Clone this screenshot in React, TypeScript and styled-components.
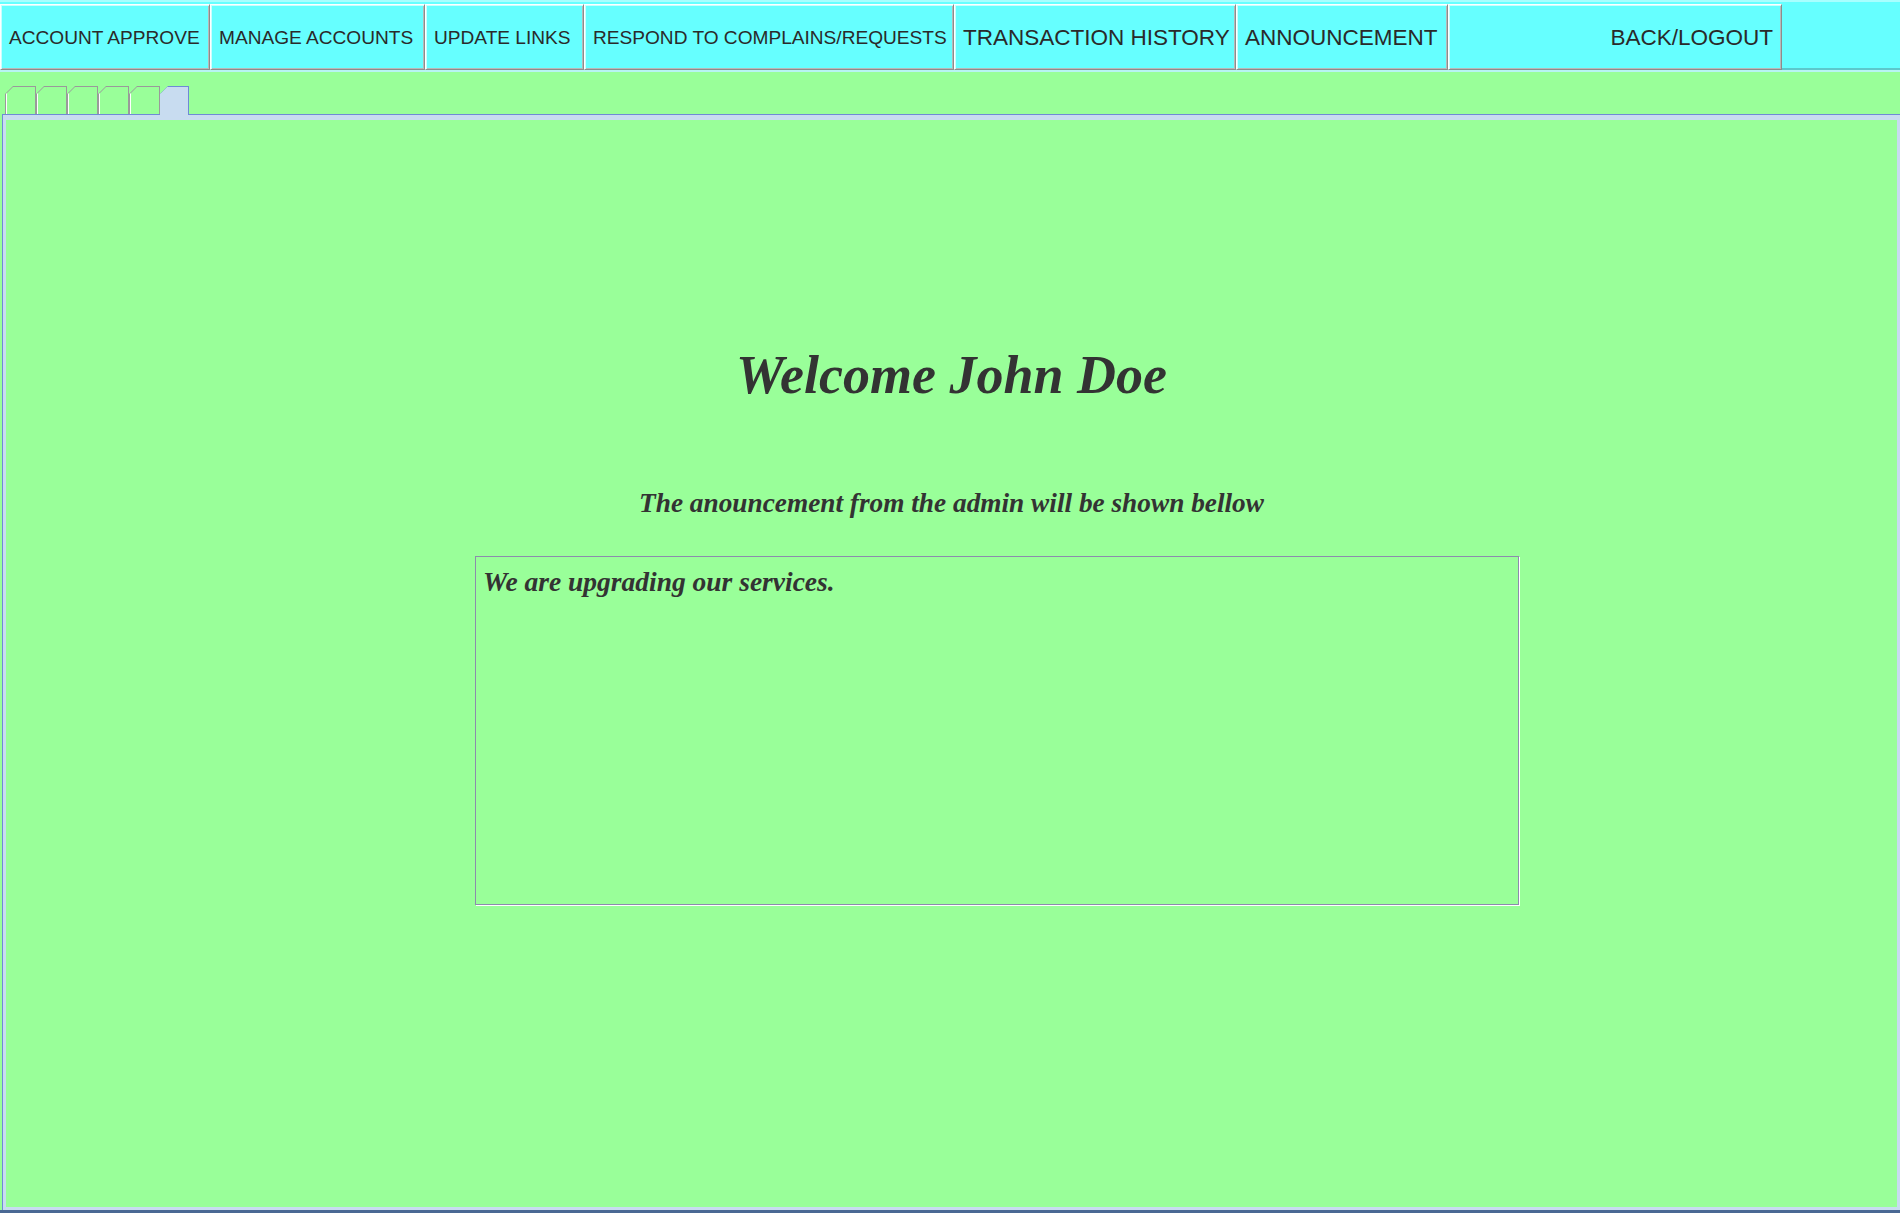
import React from "react";
import styled, { createGlobalStyle } from "styled-components";

const GlobalStyle = createGlobalStyle`
  html, body {
    margin: 0;
    padding: 0;
    background: #99ff99;
  }
  #root {
    width: 1900px;
    height: 1213px;
    overflow: hidden;
  }
`;

const Page = styled.div`
  display: flex;
  flex-direction: column;
  width: 1900px;
  height: 1213px;
  background: #99ff99;
`;

const Toolbar = styled.div`
  display: flex;
  align-items: flex-start;
  height: 72px;
  box-sizing: border-box;
  background: #66ffff;
  border-top: 2px solid #a8ffff;
  padding-top: 2px;
  border-bottom: 2px solid #b8f4f4;
  box-shadow: inset 0 -2px 0 #5cc8cc;
`;

const NavButton = styled.button<{ $w: number; $align?: "left" | "right"; $big?: boolean }>`
  width: ${(p) => p.$w}px;
  height: 66px;
  box-sizing: border-box;
  margin: 0;
  padding: 2px 8px 0 8px;
  display: flex;
  align-items: center;
  justify-content: ${(p) => (p.$align === "right" ? "flex-end" : "flex-start")};
  background: #66ffff;
  border-style: solid;
  border-width: 1px;
  border-color: #ffffff #8c8c8c #8c8c8c #ffffff;
  box-shadow: inset 1px 1px 0 #c8ffff, inset -1px -1px 0 #b8b8b8;
  font-family: "Liberation Sans", Arial, sans-serif;
  font-size: ${(p) => (p.$big ? 22.5 : 19.1)}px;
  font-weight: normal;
  color: #2a2a2a;
  white-space: nowrap;
  overflow: hidden;
  cursor: pointer;
`;

const TabRow = styled.div`
  display: flex;
  align-items: flex-end;
  height: 42px;
  padding-left: 5px;
  box-sizing: border-box;
`;

const TabOuter = styled.div<{ $selected?: boolean }>`
  width: ${(p) => (p.$selected ? 29 : 31)}px;
  height: ${(p) => (p.$selected ? 29 : 28)}px;
  margin-bottom: ${(p) => (p.$selected ? -1 : 0)}px;
  box-sizing: border-box;
  padding: ${(p) => (p.$selected ? "1px 1px 0 0" : "1px 1px 0 1px")};
  background: ${(p) => (p.$selected ? "#6f8ad6" : "#9a9a9a")};
  clip-path: polygon(0 8px, 8px 0, 100% 0, 100% 100%, 0 100%);
  position: relative;
  z-index: ${(p) => (p.$selected ? 2 : 1)};
`;

const TabInner = styled.div<{ $selected?: boolean }>`
  width: 100%;
  height: 100%;
  box-sizing: border-box;
  background: ${(p) => (p.$selected ? "#c8dcf0" : "#99ff99")};
  border-left: 1px solid ${(p) => (p.$selected ? "#c8dcf0" : "#ffffff")};
  clip-path: polygon(0 7px, 7px 0, 100% 0, 100% 100%, 0 100%);
`;

const TabBody = styled.div`
  flex: 1;
  display: flex;
  margin-left: 2px;
  border-top: 1px solid #6f8ad6;
  border-left: 1px solid #6f8ad6;
`;

const Panel = styled.div`
  flex: 1;
  display: flex;
  flex-direction: column;
  align-items: center;
  background: #99ff99;
  border-style: solid;
  border-color: #c8dcf0;
  border-width: 5px 3px 3px 3px;
`;

const Welcome = styled.h1`
  margin: 220px 0 0 0;
  font-family: "Liberation Serif", "Times New Roman", serif;
  font-style: italic;
  font-weight: bold;
  font-size: 54px;
  line-height: 70px;
  color: #333333;
`;

const Subtitle = styled.h2`
  margin: 77px 0 0 0;
  font-family: "Liberation Serif", "Times New Roman", serif;
  font-style: italic;
  font-weight: bold;
  font-size: 27.3px;
  line-height: 32px;
  color: #333333;
`;

const AnnouncementRow = styled.div`
  align-self: stretch;
  display: flex;
  padding-left: 469px;
  margin-top: 37px;
`;

const AnnouncementBox = styled.div`
  width: 1044px;
  height: 349px;
  box-sizing: border-box;
  border: 1px solid #8c8cac;
  box-shadow: 1px 1px 0 #ffffff;
  padding: 10px 7px;
  font-family: "Liberation Serif", "Times New Roman", serif;
  font-style: italic;
  font-weight: bold;
  font-size: 27.5px;
  line-height: 30px;
  color: #333333;
`;

const Taskbar = styled.div`
  height: 3px;
  background: #4a6894;
`;

const buttons: { label: string; w: number; align?: "left" | "right"; big?: boolean }[] = [
  { label: "ACCOUNT APPROVE", w: 210 },
  { label: "MANAGE ACCOUNTS", w: 215 },
  { label: "UPDATE LINKS", w: 159 },
  { label: "RESPOND TO COMPLAINS/REQUESTS", w: 370 },
  { label: "TRANSACTION HISTORY", w: 282, big: true },
  { label: "ANNOUNCEMENT", w: 212, big: true },
  { label: "BACK/LOGOUT", w: 334, align: "right", big: true },
];

export default function App() {
  return (
    <>
      <GlobalStyle />
      <Page>
        <Toolbar>
          {buttons.map((b) => (
            <NavButton key={b.label} $w={b.w} $align={b.align} $big={b.big}>
              {b.label}
            </NavButton>
          ))}
        </Toolbar>
        <TabRow>
          {[0, 1, 2, 3, 4].map((i) => (
            <TabOuter key={i}>
              <TabInner />
            </TabOuter>
          ))}
          <TabOuter $selected>
            <TabInner $selected />
          </TabOuter>
        </TabRow>
        <TabBody>
          <Panel>
            <Welcome>Welcome John Doe</Welcome>
            <Subtitle>The anouncement from the admin will be shown bellow</Subtitle>
            <AnnouncementRow>
              <AnnouncementBox>We are upgrading our services.</AnnouncementBox>
            </AnnouncementRow>
          </Panel>
        </TabBody>
        <Taskbar />
      </Page>
    </>
  );
}
